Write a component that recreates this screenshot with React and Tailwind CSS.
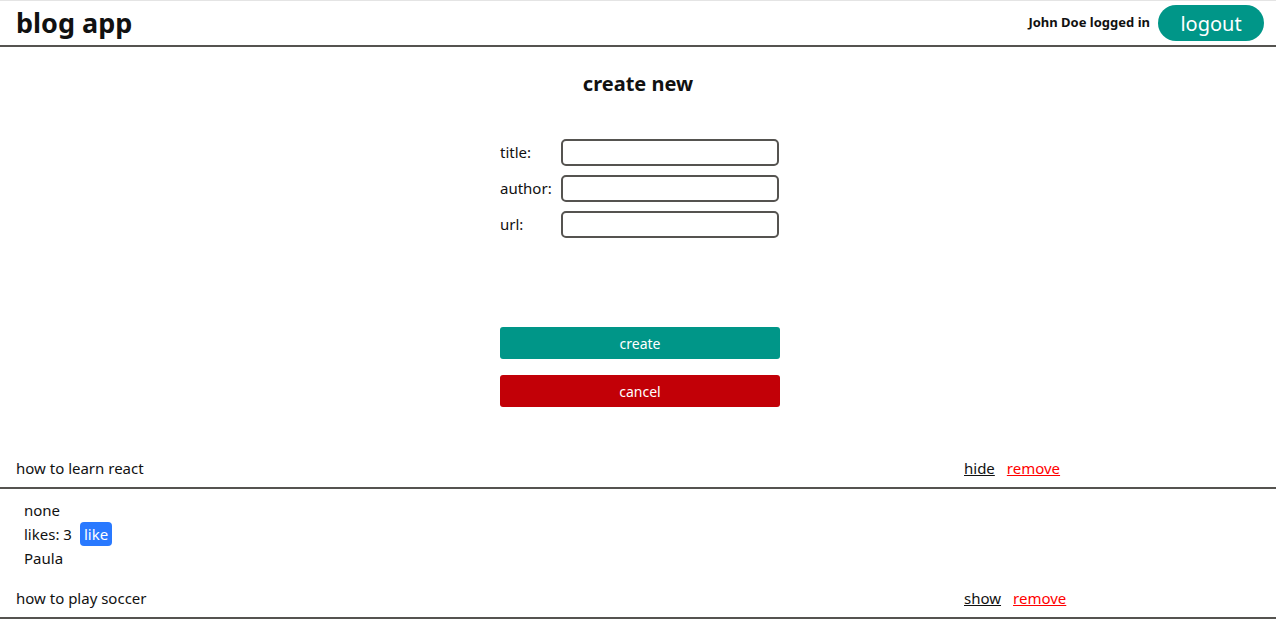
const font = { fontFamily: '"Noto Sans", "Open Sans", sans-serif' };

const Blog = ({ title, open, likes, author, url }) => (
  <div>
    <div className="flex items-center h-[40px] border-b-2 border-[#555350] px-4 text-[15px] text-[#111]">
      <div className="flex-1">{title}</div>
      <div className="w-[296px] flex gap-3">
        <a className="underline text-[#111] cursor-pointer">{open ? 'hide' : 'show'}</a>
        <a className="underline text-[#ff0000] cursor-pointer">remove</a>
      </div>
    </div>
    {open && (
      <div className="px-6 pt-[9px] pb-[9px] text-[15px] leading-6 text-[#111]">
        <div>{url}</div>
        <div className="flex items-center gap-2">
          likes: {likes}
          <button className="bg-[#2979ff] text-white rounded-[4px] px-1 h-6 leading-6">like</button>
        </div>
        <div>{author}</div>
      </div>
    )}
  </div>
);

export default function App() {
  return (
    <div className="min-h-[638px] bg-white border-t border-[#e4e4e4]" style={font}>
      <header className="flex items-center justify-between h-[46px] px-4 border-b-2 border-[#555350]">
        <h1 className="text-[27px] font-bold text-[#111] leading-none -mt-[2px]">blog app</h1>
        <div className="flex items-center gap-2 -mr-[4px]">
          <span className="text-[13px] font-bold text-[#111]">John Doe logged in</span>
          <button className="bg-[#009688] text-white rounded-full w-[106px] h-9 text-[20px] leading-none pt-[2px]">logout</button>
        </div>
      </header>

      <div className="flex flex-col items-center pt-[23px]">
        <h2 className="text-[20px] font-bold text-[#111] leading-7">create new</h2>
        <form className="w-[280px] ml-[4px] mt-[41px] flex flex-col gap-[9px]">
          {['title:', 'author:', 'url:'].map(l => (
            <label key={l} className="flex items-center text-[15px] text-[#111]">
              <span className="w-[62px]">{l}</span>
              <input className="w-[218px] h-[27px] -ml-[1px] rounded-[5px] border-2 border-[#555350] outline-none" />
            </label>
          ))}
          <button type="button" className="mt-[80px] h-8 bg-[#009688] text-white rounded-[3px] text-[14px]">create</button>
          <button type="button" className="mt-[7px] h-8 bg-[#c20007] text-white rounded-[3px] text-[14px]">cancel</button>
        </form>
      </div>

      <div className="mt-[42px]">
        <Blog title="how to learn react" open url="none" likes={3} author="Paula" />
        <Blog title="how to play soccer" />
      </div>
    </div>
  );
}
